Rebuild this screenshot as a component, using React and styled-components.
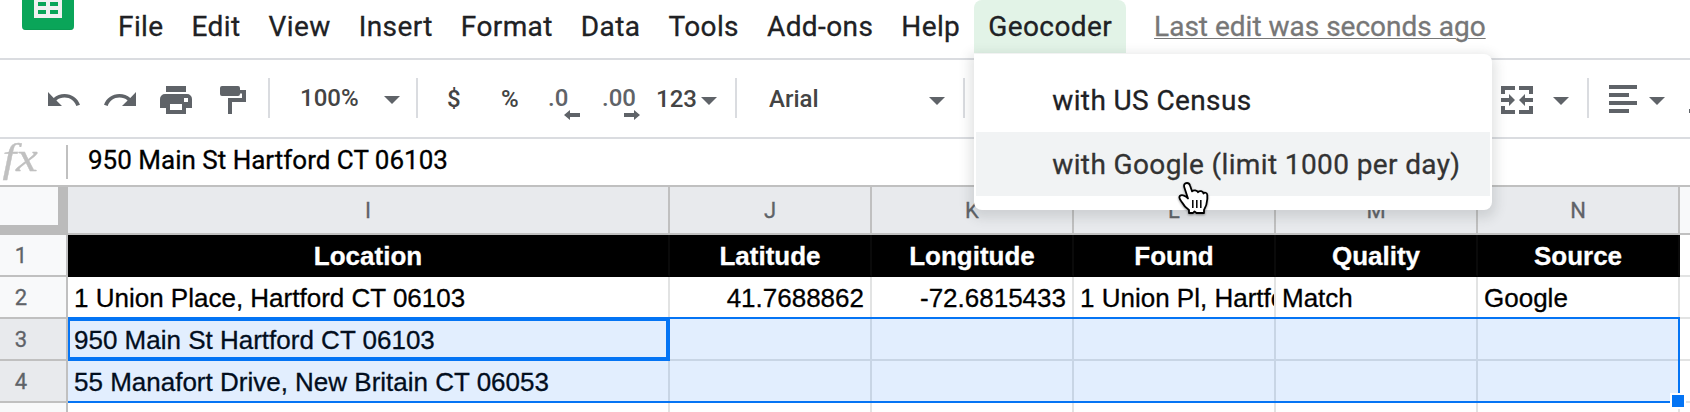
import React from 'react';
import styled, { createGlobalStyle, css } from 'styled-components';

const GlobalStyle = createGlobalStyle`
  * { box-sizing: border-box; }
  body { margin: 0; background: #fff; overflow: hidden; }
`;

const ROBOTO = "Roboto, 'Liberation Sans', sans-serif";
const ARIAL = "'Liberation Sans', Arial, sans-serif";
const BLUE = '#0474f4';

const Page = styled.div`
  position: relative;
  display: flex;
  flex-direction: column;
  width: 1690px;
  height: 412px;
  overflow: hidden;
  background: #fff;
  font-family: ${ROBOTO};
  -webkit-text-stroke: 0.3px currentColor;
`;

/* Menu bar */
const MenuBar = styled.header`
  display: flex;
  align-items: flex-start;
  flex: none;
  height: 60px;
  padding-left: 22px;
  border-bottom: 2px solid #dadce0;
`;

const Logo = styled.svg`
  display: block;
  flex: none;
  width: 52px;
  height: 30px;
  margin-right: 30px;
`;

const MenuItem = styled.div`
  position: relative;
  height: 53px;
  padding: 0 14px;
  border-radius: 8px 8px 0 0;
  background: ${(p) => (p.$open ? '#e2f3e7' : 'transparent')};
  color: #202124;
  font-size: 28px;
  line-height: 53px;
  letter-spacing: 0.4px;
  white-space: nowrap;
`;

const LastEdit = styled.a`
  margin-left: 28px;
  color: #777;
  font-size: 28px;
  line-height: 53px;
  text-decoration: underline;
  text-decoration-thickness: 1px;
  text-underline-offset: 2px;
  white-space: nowrap;
`;

const Dropdown = styled.div`
  position: absolute;
  z-index: 5;
  top: 54px;
  left: 0;
  width: 518px;
  height: 156px;
  padding: 14px 2px;
  border-radius: 0 8px 8px 8px;
  background: #fff;
  box-shadow: 0 4px 12px 4px rgba(60, 64, 67, 0.15);
`;

const DropdownItem = styled.div`
  height: 64px;
  padding-left: 76px;
  background: ${(p) => (p.$hover ? '#f1f3f4' : '#fff')};
  color: ${(p) => (p.$hover ? '#333' : '#202124')};
  font-size: 28px;
  line-height: 66px;
  letter-spacing: 0.38px;
`;

const Pointer = styled.svg`
  position: absolute;
  z-index: 10;
  left: 204px;
  top: 128px;
  width: 32px;
  height: 36px;
  overflow: visible;
  filter: drop-shadow(0 1px 1px rgba(0, 0, 0, 0.4));
`;

/* Toolbar */
const Toolbar = styled.div`
  display: flex;
  align-items: center;
  flex: none;
  height: 79px;
  padding: 0 0 1px 48px;
  border-bottom: 2px solid #dadce0;
`;

const Icon = styled.svg`
  display: block;
  flex: none;
  width: ${(p) => p.$w}px;
  height: ${(p) => p.$h}px;
  margin-left: ${(p) => p.$gap || 0}px;
  margin-top: ${(p) => p.$drop ?? 4}px;
  fill: #5f6368;
  overflow: visible;
`;

const Divider = styled.div`
  flex: none;
  width: 2px;
  height: 40px;
  margin-left: ${(p) => p.$gap}px;
  background: #dadce0;
`;

const ToolText = styled.div`
  flex: none;
  width: ${(p) => p.$w}px;
  margin-left: ${(p) => p.$gap}px;
  padding-top: ${(p) => p.$drop ?? 1}px;
  color: #444;
  font-size: 24px;
  font-weight: 500;
  line-height: 40px;
  white-space: nowrap;
  -webkit-text-stroke: 0;
`;

const Decimal = styled.div`
  position: relative;
  flex: none;
  width: ${(p) => p.$w}px;
  margin-left: ${(p) => p.$gap}px;
  color: #5f6368;
  font-size: 24px;
  font-weight: 500;
  line-height: 40px;
  -webkit-text-stroke: 0;
`;

const DecimalArrow = styled.svg`
  position: absolute;
  right: 0;
  top: 32px;
  width: 16px;
  height: 10px;
  fill: #5f6368;
`;

/* Formula bar */
const FormulaBar = styled.div`
  display: flex;
  flex: none;
  height: 48px;
  border-bottom: 2px solid #c0c0c0;
`;

const Fx = styled.div`
  width: 66px;
  margin-top: -12px;
  padding-left: 2px;
  color: #c0c0c0;
  font-family: 'Liberation Serif', serif;
  font-size: 41px;
  font-style: italic;
  line-height: 60px;
  transform: scaleX(1.2);
  transform-origin: left;
`;

const FormulaDivider = styled.div`
  width: 2px;
  height: 34px;
  margin-top: 6px;
  background: #c0c0c0;
`;

const FormulaText = styled.div`
  padding-left: 20px;
  color: #000;
  font-size: 26px;
  line-height: 42px;
  white-space: nowrap;
`;

/* Spreadsheet */
const Sheet = styled.div`
  display: grid;
  flex: none;
  grid-template-columns: 68px 602px repeat(5, 202px) 60px;
  grid-template-rows: 48px repeat(5, 42px);
`;

const Corner = styled.div`
  border-right: 10px solid #bbb;
  border-bottom: 10px solid #bbb;
  background: #f8f9fa;
`;

const headStyle = css`
  display: flex;
  align-items: center;
  justify-content: center;
  border-right: 2px solid #c0c0c0;
  border-bottom: 2px solid #c0c0c0;
  background: ${(p) => (p.$selected ? '#e8eaed' : '#f8f9fa')};
  color: #5f6368;
  font-size: 22px;
`;

const ColumnHead = styled.div`
  ${headStyle}
`;

const RowHead = styled.div`
  ${headStyle}
  padding-top: 1px;
  padding-right: 24px;
`;

const Cell = styled.div`
  min-width: 0;
  padding: 0 6px;
  overflow: hidden;
  border-right: 2px solid #e2e3e3;
  border-bottom: 2px solid #e2e3e3;
  color: #000;
  font-family: ${ARIAL};
  font-size: 26px;
  line-height: 43px;
  text-align: ${(p) => p.$align || 'left'};
  white-space: nowrap;
  ${(p) =>
    p.$title &&
    css`
      border-right-color: #0a0a0a;
      border-bottom-color: #000;
      background: #000;
      color: #fff;
      font-weight: 700;
      text-align: center;
    `}
`;

const Selection = styled.div`
  position: relative;
  z-index: 1;
  grid-column: 2 / 8;
  grid-row: 4 / 6;
  margin-top: -2px;
  border: solid ${BLUE};
  border-width: 2px 2px 2px 0;
  background: rgba(14, 113, 245, 0.12);
  background-clip: padding-box;
`;

const ActiveCell = styled.div`
  z-index: 2;
  grid-column: 2;
  grid-row: 4;
  margin-top: -2px;
  border: 4px solid ${BLUE};
  border-left-width: 2px;
`;

const FillHandle = styled.div`
  position: absolute;
  right: -8px;
  bottom: -8px;
  width: 16px;
  height: 16px;
  border: 2px solid #fff;
  background: ${BLUE};
`;

const Caret = ({ gap, drop = 6 }) => (
  <Icon $w={16} $h={8} $gap={gap} $drop={drop} viewBox="0 0 16 8">
    <path d="M0 0h16L8 8z" />
  </Icon>
);

const MENUS = ['File', 'Edit', 'View', 'Insert', 'Format', 'Data', 'Tools', 'Add-ons', 'Help'];
const COLUMNS = ['I', 'J', 'K', 'L', 'M', 'N', ''];
const ROWS = [
  ['Location', 'Latitude', 'Longitude', 'Found', 'Quality', 'Source', ''],
  ['1 Union Place, Hartford CT 06103', '41.7688862', '-72.6815433', '1 Union Pl, Hartfo', 'Match', 'Google', ''],
  ['950 Main St Hartford CT 06103', '', '', '', '', '', ''],
  ['55 Manafort Drive, New Britain CT 06053', '', '', '', '', '', ''],
  ['', '', '', '', '', '', ''],
];

export default function App() {
  return (
    <Page>
      <GlobalStyle />
      <MenuBar>
        <Logo viewBox="0 0 52 30">
          <path d="M0 0h52v26a4 4 0 0 1-4 4H4a4 4 0 0 1-4-4z" fill="#0aa559" />
          <path d="M0 25.500a4 4 0 0 0 4 4h44a4 4 0 0 0 4-4v.5a4 4 0 0 1-4 4H4a4 4 0 0 1-4-4z" fill="#08914e" />
          <path d="M12 0h28v18H12zM16 2v4h8V2zM28 2v4h8V2zM16 10v4h8v-4zM28 10v4h8v-4z" fill="#f1f1f1" fillRule="evenodd" />
        </Logo>
        {MENUS.map((m) => (
          <MenuItem key={m}>{m}</MenuItem>
        ))}
        <MenuItem $open>
          Geocoder
          <Dropdown>
            <DropdownItem>with US Census</DropdownItem>
            <DropdownItem $hover>with Google (limit 1000 per day)</DropdownItem>
            <Pointer viewBox="0 0 32 36">
              <path
                d="M9 1C6.5 1 5.6 3 6.3 5.2L10 16.5C8 14 4 12 1.8 14 0 16.4 3 18.4 4.5 21c1.5 3 3.5 5 6.5 7v3h4l1.5-1.6L18.500 31H26v-3c1.500-2.500 3-6 3.300-11v-4c-.3-2.500-2.800-3-3.800-1.500-.5-2.500-4-3.100-5.500-1.300-1-2.200-4.500-2.400-6-.9l-2-5.800C11.500 1.800 10.300 1 9 1z"
                fill="#fff"
                stroke="#000"
                strokeWidth="1.8"
                strokeLinejoin="round"
              />
              <path d="M14.800 18v8M18.800 18v8M22.800 18v8" stroke="#000" strokeWidth="1.500" />
            </Pointer>
          </Dropdown>
        </MenuItem>
        <LastEdit>Last edit was seconds ago</LastEdit>
      </MenuBar>

      <Toolbar>
        <Icon $w={32} $h={28} viewBox="0 0 32 28">
          <path d="M0 6v14h14l-5.600-5.600C10.600 12.600 13.400 11.600 16.600 11.600c5.400 0 10 3.400 11.700 8.400l3.700-1.200C29.700 12.200 23.700 8 16.600 8c-4.200 0-8 1.500-10.900 3.900z" />
        </Icon>
        <Icon $w={32} $h={28} $gap={24} viewBox="0 0 32 28">
          <path d="M32 6v14H18l5.600-5.600C21.400 12.600 18.600 11.600 15.400 11.600c-5.400 0-10 3.400-11.700 8.400L0 18.800C2.300 12.200 8.300 8 15.400 8c4.200 0 8 1.500 10.900 3.900z" />
        </Icon>
        <Icon $w={32} $h={28} $gap={24} viewBox="0 0 32 28">
          <path d="M6 0h20v6H6zM5 8h22a5 5 0 0 1 5 5v9h-6v6H6v-6H0v-9a5 5 0 0 1 5-5zM10 18v6h12v-6zM24 12v4h4v-4z" fillRule="evenodd" />
        </Icon>
        <Icon $w={26} $h={28} $gap={28} viewBox="0 0 26 28">
          <path d="M2 0h16a2 2 0 0 1 2 2v2h6v12H12v12H8V12h14V7.600h-2V8a2 2 0 0 1-2 2H2a2 2 0 0 1-2-2V2a2 2 0 0 1 2-2z" />
        </Icon>
        <Divider $gap={22} />
        <ToolText $w={84} $gap={30} $drop={0}>100%</ToolText>
        <Caret gap={0} drop={4} />
        <Divider $gap={16} />
        <ToolText $w={52} $gap={29}>$</ToolText>
        <ToolText $w={40} $gap={2}>%</ToolText>
        <Decimal $w={32} $gap={7}>
          .0
          <DecimalArrow viewBox="0 0 16 10"><path d="M0 5l6-5v3h10v4H6v3z" /></DecimalArrow>
        </Decimal>
        <Decimal $w={38} $gap={22}>
          .00
          <DecimalArrow viewBox="0 0 16 10"><path d="M16 5l-6-5v3H0v4h10v3z" /></DecimalArrow>
        </Decimal>
        <ToolText $w={45} $gap={16}>123</ToolText>
        <Caret gap={0} />
        <Divider $gap={18} />
        <ToolText $w={160} $gap={32}>Arial</ToolText>
        <Caret gap={0} />
        <Divider $gap={18} />
        <Icon $w={32} $h={28} $gap={536} viewBox="0 0 32 28">
          <path d="M0 0h14v4H4v4H0zM18 0h14v8h-4V4H18zM0 20h4v4h10v4H0zM28 20h4v8H18v-4h10zM0 12h8V8l6 6-6 6v-4H0zM32 12h-8V8l-6 6 6 6v-4h8z" />
        </Icon>
        <Caret gap={20} />
        <Divider $gap={18} />
        <Icon $w={28} $h={28} $gap={20} viewBox="0 0 28 28">
          <path d="M0-1h28v4H0zM0 7h20v4H0zM0 15h28v4H0zM0 23h20v4H0z" />
        </Icon>
        <Caret gap={12} />
        <Icon $w={28} $h={28} $gap={24} viewBox="0 0 28 28">
          <path d="M0 23h28v4H0z" />
        </Icon>
      </Toolbar>

      <FormulaBar>
        <Fx>fx</Fx>
        <FormulaDivider />
        <FormulaText>950 Main St Hartford CT 06103</FormulaText>
      </FormulaBar>

      <Sheet>
        <Corner />
        {COLUMNS.map((c, i) => (
          <ColumnHead key={i} $selected={i < 6}>{c}</ColumnHead>
        ))}
        {ROWS.map((row, r) => (
          <React.Fragment key={r}>
            <RowHead style={{ gridRow: r + 2 }} $selected={r === 2 || r === 3}>{r < 4 ? r + 1 : ''}</RowHead>
            {row.map((text, c) => (
              <Cell
                key={c}
                style={{ gridRow: r + 2, gridColumn: c + 2 }}
                $title={r === 0 && c < 6}
                $align={c === 1 || c === 2 ? 'right' : 'left'}
              >
                {text}
              </Cell>
            ))}
          </React.Fragment>
        ))}
        <Selection><FillHandle /></Selection>
        <ActiveCell />
      </Sheet>
    </Page>
  );
}
